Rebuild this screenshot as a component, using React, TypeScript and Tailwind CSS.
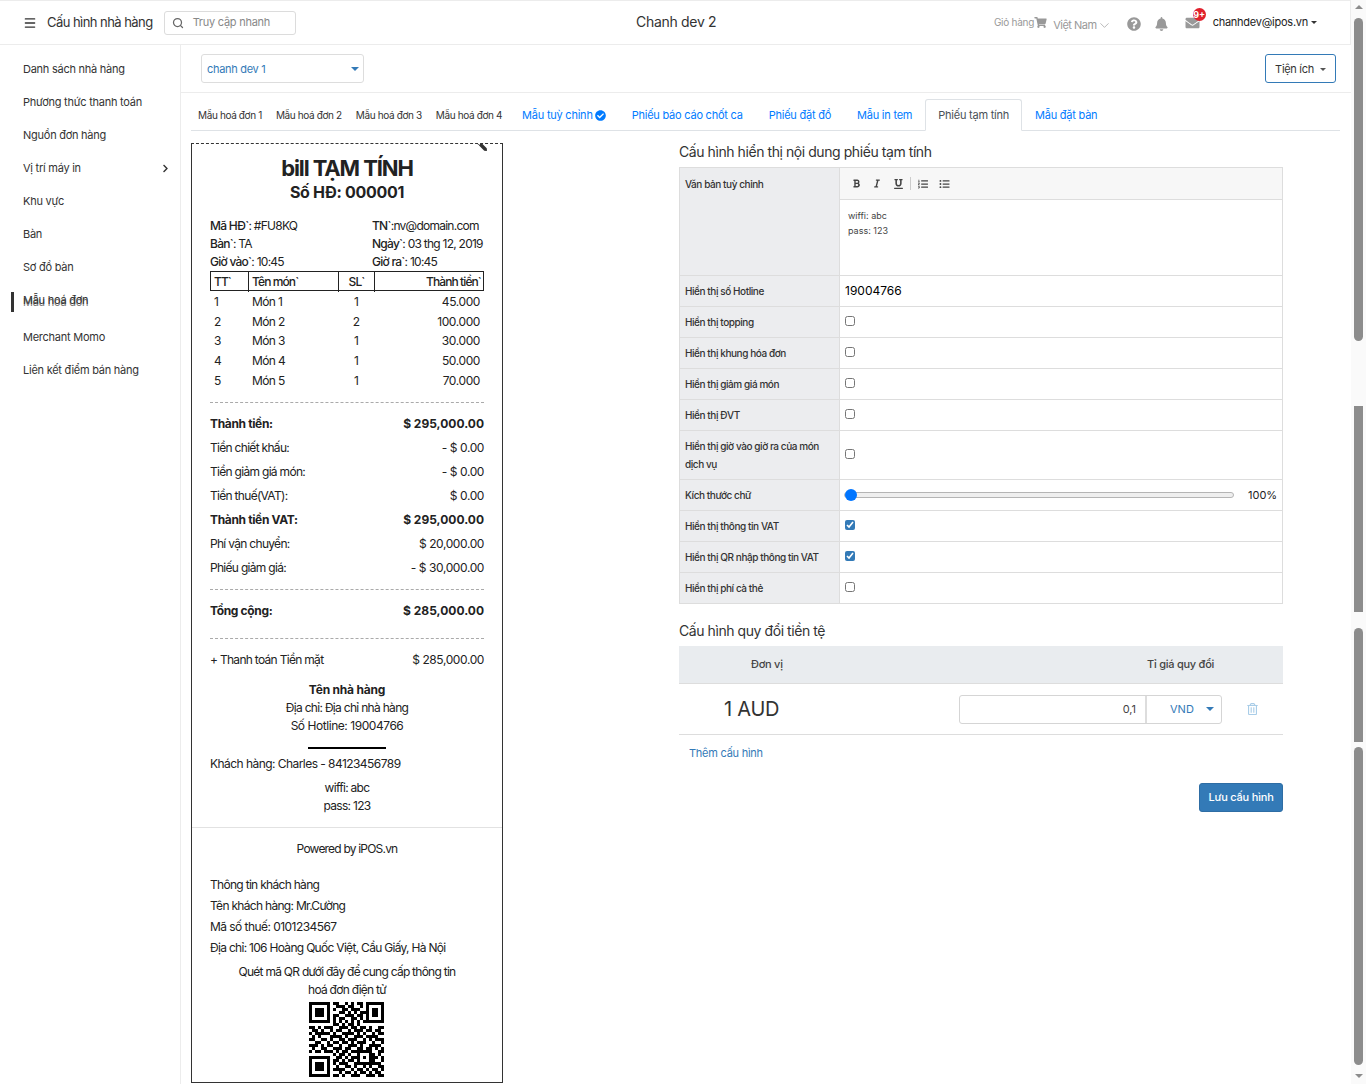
import React from "react";
import { Menu, Search, ChevronDown } from "lucide-react";
import {
  FaShoppingCart, FaQuestionCircle, FaBell, FaEnvelope, FaBold, FaItalic, FaUnderline,
  FaListOl, FaListUl, FaCheckCircle, FaRegTrashAlt, FaChevronRight, FaPen,
} from "react-icons/fa";

const side = ["Danh sách nhà hàng", "Phương thức thanh toán", "Nguồn đơn hàng", "Vị trí máy in", "Khu vực", "Bàn", "Sơ đồ bàn", "Mẫu hoá đơn", "Merchant Momo", "Liên kết điểm bán hàng"];

const qr = [
  "1111111011001010110111111",
  "1000001001110110010100001",
  "1011101010011011100101101",
  "1011101000110101011101101",
  "1011101011001110110101101",
  "1000001010110011010100001",
  "1111111010101010101111111",
  "0000000011010110100000000",
  "1101011100111011011010011",
  "0110100101100101110110110",
  "1011111010011110101001011",
  "0101000111101001110111100",
  "1100110100110111001010111",
  "0011001011011010111001001",
  "1110101100100111010011110",
  "0100110011101100110110101",
  "1011011101011011111110011",
  "0000000010110100100011010",
  "1111111001101011101011101",
  "1000001011010110100011001",
  "1011101010111001111111110",
  "1011101001001101001010011",
  "1011101011110010110101101",
  "1000001000101101011010110",
  "1111111011010011100111011",
];

function Row({ l, r, bold }: { l: string; r: string; bold?: boolean }) {
  return (
    <div className={`flex h-6 items-center justify-between ${bold ? "font-bold" : ""}`}>
      <span className={bold ? "tracking-[-0.35px]" : "tracking-[-0.7px]"}>{l}</span>
      <span className={bold ? "tracking-normal" : "tracking-[-0.4px]"}>{r}</span>
    </div>
  );
}

function Dash({ className }: { className: string }) {
  return <div className={`border-t border-dashed border-[#aaaaaa] ${className}`} />;
}

function Receipt() {
  const items = [["1", "Món 1", "1", "45.000"], ["2", "Món 2", "2", "100.000"], ["3", "Món 3", "1", "30.000"], ["4", "Món 4", "1", "50.000"], ["5", "Món 5", "1", "70.000"]];
  return (
    <div className="relative h-[940px] w-[312px] shrink-0 overflow-hidden border border-[#333333] text-[12px] tracking-[-0.7px] text-[#222222] [border-top-style:dashed] [font-family:Inter,sans-serif]">
      <FaPen className="absolute right-[15px] top-[-3px] h-[10px] w-[10px] scale-x-[-1] text-[#333333]" />
      <div className="px-[18px] pt-[12px]">
        <div className="text-center text-[22px] font-bold leading-6 tracking-[-1.1px]">bill TẠM TÍNH</div>
        <div className="text-center text-[16px] font-bold leading-6 tracking-[-0.3px]">Số HĐ: 000001</div>
        <div className="mt-[13px] grid grid-cols-[162px_1fr] leading-[18px] tracking-[-0.75px]">
          <div><span className="font-medium">Mã HĐ`</span>: #FU8KQ</div>
          <div className="whitespace-nowrap"><span className="font-medium">TN`</span>:nv@domain.com</div>
          <div><span className="font-medium">Bàn`</span>: TA</div>
          <div className="whitespace-nowrap"><span className="font-medium">Ngày`</span>: 03 thg 12, 2019</div>
          <div><span className="font-medium">Giờ vào`</span>: 10:45</div>
          <div><span className="font-medium">Giờ ra`</span>: 10:45</div>
        </div>
        <div className="grid h-[20px] grid-cols-[38px_90px_36px_1fr] items-stretch border border-[#222222] font-medium leading-[20px] tracking-[-0.9px]">
          <div className="border-r border-[#222222] pl-[3px]">TT`</div>
          <div className="border-r border-[#222222] pl-[3px]">Tên món`</div>
          <div className="border-r border-[#222222] text-center">SL`</div>
          <div className="pr-[2px] text-right">Thành tiền`</div>
        </div>
        <div className="mt-[1.4px]">
          {items.map((it) => (
            <div key={it[0]} className="grid h-[19.6px] grid-cols-[38px_90px_36px_1fr] items-center">
              <div className="pl-[4px]">{it[0]}</div>
              <div className="pl-[4px] tracking-[-0.6px]">{it[1]}</div>
              <div className="text-center">{it[2]}</div>
              <div className="pr-[4px] text-right tracking-[-0.4px]">{it[3]}</div>
            </div>
          ))}
        </div>
        <Dash className="mt-[11.6px]" />
        <div className="mt-[9px]">
          <Row bold l="Thành tiền:" r="$ 295,000.00" />
          <Row l="Tiền chiết khấu:" r="- $ 0.00" />
          <Row l="Tiền giảm giá món:" r="- $ 0.00" />
          <Row l="Tiền thuế(VAT):" r="$ 0.00" />
          <Row bold l="Thành tiền VAT:" r="$ 295,000.00" />
          <Row l="Phí vận chuyển:" r="$ 20,000.00" />
          <Row l="Phiếu giảm giá:" r="- $ 30,000.00" />
        </div>
        <Dash className="mt-[9px]" />
        <div className="mt-[9px]"><Row bold l="Tổng cộng:" r="$ 285,000.00" /></div>
        <Dash className="mt-[15px]" />
        <div className="mt-[9px]"><Row l="+ Thanh toán Tiền mặt" r="$ 285,000.00" /></div>
        <div className="mt-[9px] text-center leading-[18px]">
          <div className="font-bold tracking-[-0.2px]">Tên nhà hàng</div>
          <div>Địa chỉ: Địa chỉ nhà hàng</div>
          <div className="tracking-[-0.45px]">Số Hotline: 19004766</div>
        </div>
        <div className="mx-auto mt-[12px] h-[2px] w-[78px] bg-black" />
        <div className="mt-[6px] leading-[18px] tracking-[-0.55px]">Khách hàng: Charles - 84123456789</div>
        <div className="mt-[6px] text-center leading-[18px]">
          <div>wiffi: abc</div>
          <div>pass: 123</div>
        </div>
      </div>
      <div className="mt-[12px] border-t border-[#e2e2e2]" />
      <div className="px-[18px]">
        <div className="mt-[12px] text-center leading-[18px] tracking-[-0.8px]">Powered by iPOS.vn</div>
        <div className="mt-[16px] leading-[21px]">
          <div>Thông tin khách hàng</div>
          <div>Tên khách hàng: Mr.Cường</div>
          <div className="tracking-[-0.55px]">Mã số thuế: 0101234567</div>
          <div className="whitespace-nowrap">Địa chỉ: 106 Hoàng Quốc Việt, Cầu Giấy, Hà Nội</div>
        </div>
        <div className="mt-[5px] text-center leading-[18px] tracking-[-0.74px]">
          <div>Quét mã QR dưới đây để cung cấp thông tin</div>
          <div>hoá đơn điện tử</div>
        </div>
        <svg viewBox="0 0 25 25" shapeRendering="crispEdges" className="ml-[99px] mt-[3px] h-[75px] w-[75px]">
          {qr.map((row, y) => row.split("").map((c, x) => (c === "1" ? <rect key={`${x}-${y}`} x={x} y={y} width="1" height="1" fill="#000" /> : null)))}
        </svg>
      </div>
    </div>
  );
}

function CfgRow({ label, h, children }: { label: React.ReactNode; h: string; children: React.ReactNode }) {
  return (
    <div className={`flex border-b border-[#dddddd] ${h}`}>
      <div className="flex w-[160px] shrink-0 items-center border-r border-[#dddddd] bg-[#ecedef] pl-[5px] pr-2 text-[10px] font-medium leading-[18px] tracking-[-0.43px] text-[#333333]">{label}</div>
      <div className="flex min-w-0 flex-1 items-center pl-[5px]">{children}</div>
    </div>
  );
}

const Check = ({ on }: { on?: boolean }) => (
  <input type="checkbox" defaultChecked={on} className="m-0 mb-[2px] h-[10px] w-[10px] accent-[#337ab7]" />
);

function Config() {
  return (
    <div className="w-[604px] shrink-0 [font-family:Inter,sans-serif]">
      <div className="text-[14px] leading-[18px] tracking-[-0.43px] text-[#333333]">Cấu hình hiển thị nội dung phiếu tạm tính</div>
      <div className="mt-[6px] border-x border-t border-[#dddddd]">
        <div className="flex h-[108px] border-b border-[#dddddd]">
          <div className="w-[160px] shrink-0 border-r border-[#dddddd] bg-[#ecedef] pl-[5px] pt-[7px] text-[10px] font-medium leading-[18px] tracking-[-0.43px] text-[#333333]">Văn bản tuỳ chỉnh</div>
          <div className="min-w-0 flex-1">
            <div className="flex h-[32px] items-center border-b border-[#dddddd] bg-[#f7f7f7] pl-[12px] text-[#444444]">
              <FaBold className="h-[9px] w-[9px]" />
              <FaItalic className="ml-[12px] h-[9px] w-[8px]" />
              <FaUnderline className="ml-[13px] h-[10px] w-[9px]" />
              <span className="ml-[7px] h-[13px] w-px bg-[#cccccc]" />
              <FaListOl className="ml-[7px] h-[10px] w-[10px]" />
              <FaListUl className="ml-[11px] h-[10px] w-[11px]" />
            </div>
            <div className="pl-[8px] pt-[8px] text-[9px] leading-[15px] text-[#444444]">
              <div>wiffi: abc</div>
              <div>pass: 123</div>
            </div>
          </div>
        </div>
        <CfgRow label="Hiển thị số Hotline" h="h-[31px]"><span className="text-[12px] font-normal text-black">19004766</span></CfgRow>
        <CfgRow label="Hiển thị topping" h="h-[31px]"><Check /></CfgRow>
        <CfgRow label="Hiển thị khung hóa đơn" h="h-[31px]"><Check /></CfgRow>
        <CfgRow label="Hiển thị giảm giá món" h="h-[31px]"><Check /></CfgRow>
        <CfgRow label="Hiển thị ĐVT" h="h-[31px]"><Check /></CfgRow>
        <CfgRow label="Hiển thị giờ vào giờ ra của món dịch vụ" h="h-[49px]"><Check /></CfgRow>
        <CfgRow label="Kích thước chữ" h="h-[31px]">
          <input
            type="range"
            min={100}
            max={300}
            defaultValue={100}
            className="m-0 -ml-px h-[6px] w-[390px] appearance-none rounded-full border border-[#b5b5b5] bg-[#efefef] [&::-webkit-slider-thumb]:h-[12px] [&::-webkit-slider-thumb]:w-[12px] [&::-webkit-slider-thumb]:appearance-none [&::-webkit-slider-thumb]:rounded-full [&::-webkit-slider-thumb]:bg-[#0075ff]"
          />
          <span className="ml-[14px] text-[11px] text-[#222222]">100%</span>
        </CfgRow>
        <CfgRow label="Hiển thị thông tin VAT" h="h-[31px]"><Check on /></CfgRow>
        <CfgRow label="Hiển thị QR nhập thông tin VAT" h="h-[31px]"><Check on /></CfgRow>
        <CfgRow label="Hiển thị phí cà thẻ" h="h-[31px]"><Check /></CfgRow>
      </div>

      <div className="mt-[18px] text-[14px] leading-[18px] tracking-[-0.43px] text-[#333333]">Cấu hình quy đổi tiền tệ</div>
      <div className="mt-[6px] flex h-[38px] items-center border-b border-[#dddddd] bg-[#e9ecef] text-[11px] font-medium tracking-[-0.25px] text-[#444444]">
        <div className="w-[178px] pl-[72px]">Đơn vị</div>
        <div className="ml-auto w-[136px]">Tỉ giá quy đổi</div>
      </div>
      <div className="flex h-[51px] items-center border-b border-[#dddddd]">
        <div className="w-[280px] pl-[45px] text-[20px] tracking-[-0.25px] text-[#333333]">1 AUD</div>
        <div className="flex h-[29px] w-[263px] overflow-hidden rounded-[3px] border border-[#d5d5d5]">
          <div className="flex w-[187px] items-center justify-end border-r-2 border-[#dddddd] pr-[9px] text-[11px] text-[#444444]">0,1</div>
          <div className="flex flex-1 items-center pl-[23px] text-[11px] text-[#337ab7]">
            VND
            <span className="ml-[12px] h-0 w-0 border-x-[4px] border-t-[4px] border-x-transparent border-t-[#337ab7]" />
          </div>
        </div>
        <FaRegTrashAlt className="ml-[25px] h-[12px] w-[11px] text-[#a9cde8]" />
      </div>
      <div className="mt-[9px] pl-[10px] text-[11px] leading-[18px] tracking-[-0.25px] text-[#337ab7]">Thêm cấu hình</div>
      <div className="mt-[21px] flex justify-end">
        <button className="h-[29px] w-[84px] rounded-[3px] border border-[#2e6da4] bg-[#337ab7] text-[11px] font-medium tracking-[-0.2px] text-white">Lưu cấu hình</button>
      </div>
    </div>
  );
}

function Scrollbar() {
  return (
    <div className="flex h-full w-[15px] shrink-0 flex-col items-center bg-[#fafafa]">
      <div className="mt-[5px] h-0 w-0 border-x-[4px] border-b-[4px] border-x-transparent border-b-[#8c8c8c]" />
      <div className="mt-[9px] h-[323px] w-[9px] rounded-full bg-[#8c8c8c]" />
      <div className="mt-[65px] h-[206px] w-[9px] bg-[#8c8c8c]" />
      <div className="mt-[16px] h-[114px] w-[9px] rounded-t-full bg-[#8c8c8c]" />
      <div className="mt-[5px] h-[318px] w-[9px] rounded-full bg-[#8c8c8c]" />
      <div className="mt-[9px] h-0 w-0 border-x-[4px] border-t-[4px] border-x-transparent border-t-[#8c8c8c]" />
    </div>
  );
}

export default function App() {
  return (
    <div className="flex h-[1084px] w-[1366px] overflow-hidden bg-white [font-family:Inter,sans-serif]">
      <div className="flex w-[1351px] shrink-0 flex-col">
        <header className="relative flex h-[45px] shrink-0 items-center border-y border-r border-[#ececec] pl-[23px] text-[#333333]">
          <Menu className="h-[14px] w-[14px]" strokeWidth={2.2} />
          <span className="ml-[10px] text-[13px] tracking-[-0.55px]">Cấu hình nhà hàng</span>
          <div className="ml-[11px] flex h-[24px] w-[132px] items-center rounded-[3px] border border-[#dcdcdc] pl-[7px] text-[11px] tracking-[-0.25px] text-[#888888]">
            <Search className="h-[12px] w-[12px] text-[#666666]" strokeWidth={2.5} />
            <span className="ml-[9px]">Truy cập nhanh</span>
          </div>
          <div className="absolute left-[636px] top-[12px] text-[14px] leading-[18px] tracking-[-0.3px]">Chanh dev 2</div>
          <div className="ml-auto flex items-center pr-[33px] text-[#999999]">
            <span className="text-[10px] tracking-[-0.25px]">Giỏ hàng</span>
            <FaShoppingCart className="h-[11px] w-[13px]" />
            <span className="ml-[6px] mt-[5px] text-[11px] tracking-[-0.5px]">Việt Nam</span>
            <ChevronDown className="mt-[5px] h-[15px] w-[15px]" strokeWidth={1.1} />
            <FaQuestionCircle className="ml-[15px] mt-[2px] h-[14px] w-[14px]" />
            <FaBell className="ml-[14px] mt-[2px] h-[14px] w-[13px]" />
            <span className="relative ml-[17px] mt-[1px]">
              <FaEnvelope className="h-[14px] w-[15px]" />
              <span className="absolute left-[8px] top-[-8px] flex h-[13px] w-[13px] items-center justify-center rounded-full bg-[#e0202c] text-[9px] font-bold leading-none text-white">9+</span>
            </span>
            <span className="ml-[13px] text-[11px] tracking-[-0.25px] text-[#222222]">chanhdev@ipos.vn</span>
            <span className="ml-[3px] h-0 w-0 border-x-[3px] border-t-[3px] border-x-transparent border-t-[#333333]" />
          </div>
        </header>
        <div className="flex min-h-0 flex-1">
          <aside className="w-[181px] shrink-0 border-r border-[#ececec] pt-[8px] text-[11px] tracking-[-0.25px] text-[#333333]">
            {side.map((s, i) => (
              <div key={s} className={`relative flex items-center justify-between pl-[23px] pr-[10px] ${i === 7 ? "h-[37px] pb-[4px]" : "h-[33px]"}`}>
                {i === 7 && <span className="absolute left-[11px] top-[8px] h-[20px] w-[3px] bg-[#333333]" />}
                <span className={i === 7 ? "[text-shadow:0_1.5px_0_#777777]" : ""}>{s}</span>
                {i === 3 && <FaChevronRight className="h-[9px] w-[9px] text-[#333333]" />}
              </div>
            ))}
          </aside>
          <main className="min-w-0 flex-1">
            <div className="flex h-[48px] items-start justify-between border-b border-[#ececec] pl-[20px] pr-[15px] pt-[9px]">
              <div className="flex h-[29px] w-[163px] items-center justify-between rounded-[3px] border border-[#dddddd] pl-[5px] pr-[4px] pt-px text-[11px] tracking-[-0.3px] text-[#337ab7]">
                chanh dev 1
                <span className="h-0 w-0 border-x-[4px] border-t-[4px] border-x-transparent border-t-[#337ab7]" />
              </div>
              <div className="flex h-[29px] w-[71px] items-center justify-center gap-[6px] rounded-[3px] border border-[#337ab7] pt-px text-[11px] tracking-[-0.3px] text-[#333333]">
                Tiện ích
                <span className="h-0 w-0 border-x-[3px] border-t-[3px] border-x-transparent border-t-[#555555]" />
              </div>
            </div>
            <div className="ml-[10px] mr-[11px] mt-[6px] flex h-[32px] items-stretch border-b border-[#dee2e6] pt-px text-[11px] tracking-[-0.23px]">
              {["Mẫu hoá đơn 1", "Mẫu hoá đơn 2", "Mẫu hoá đơn 3", "Mẫu hoá đơn 4"].map((t) => (
                <div key={t} className="flex items-center px-[7px] text-[10px] tracking-[-0.37px] text-[#333333]">{t}</div>
              ))}
              <div className="flex items-center gap-[2px] px-[13px] text-[#007bff]">Mẫu tuỳ chỉnh <FaCheckCircle className="h-[11px] w-[11px]" /></div>
              <div className="flex items-center px-[13px] text-[#007bff]">Phiếu báo cáo chốt ca</div>
              <div className="flex items-center px-[13px] text-[#007bff]">Phiếu đặt đồ</div>
              <div className="flex items-center px-[13px] text-[#007bff]">Mẫu in tem</div>
              <div className="-mb-px -mt-px flex items-center rounded-t-[3px] border border-[#dee2e6] border-b-white bg-white px-[12px] text-[#495057]">Phiếu tạm tính</div>
              <div className="flex items-center px-[13px] text-[#007bff]">Mẫu đặt bàn</div>
            </div>
            <div className="ml-[10px] mt-[12px] flex items-start gap-[176px]">
              <Receipt />
              <Config />
            </div>
          </main>
        </div>
      </div>
      <Scrollbar />
    </div>
  );
}
